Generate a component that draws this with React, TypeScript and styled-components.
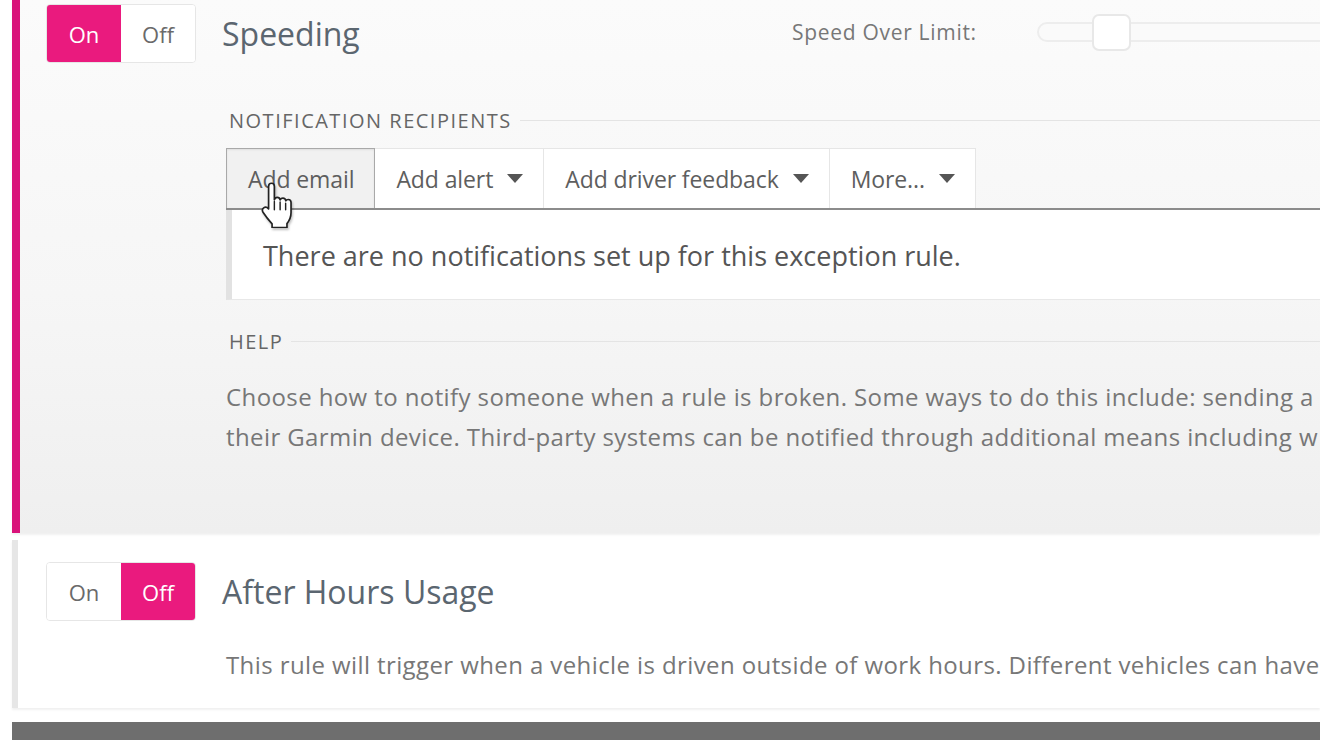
import styled, { createGlobalStyle } from 'styled-components';

const GlobalStyle = createGlobalStyle`
  html, body {
    margin: 0;
    padding: 0;
    background: #ffffff;
    overflow: hidden;
  }
  body {
    font-family: 'Open Sans', 'Noto Sans', sans-serif;
    color: #666;
  }
`;

const PINK = '#ea1a7e';

const HandCursor = () => (
  <svg width="36" height="46" viewBox="0 0 30 38">
    <path
      d="M8 3.5c0-1.6 1.1-2.6 2.4-2.6s2.4 1 2.4 2.6v11.2c0.4-1.4 1.3-2.1 2.4-2.1 1.3 0 2.2 0.9 2.4 2.2 0.4-1 1.3-1.6 2.3-1.6 1.3 0 2.3 1 2.4 2.3 0.4-0.7 1.2-1.1 2-1.1 1.4 0 2.4 1.1 2.4 2.6v8.3c0 4.2-1.6 7-3.4 9.2v3.4H10.9v-3.2c-2.2-2.4-5.1-5.8-7.4-9.4-0.9-1.4-0.8-3 0.4-3.9 1.3-1 3-0.5 4.1 0.9V3.5z"
      fill="#fff"
      stroke="#222"
      strokeWidth="1.4"
      strokeLinejoin="round"
    />
    <path d="M12.8 16v7M17.6 16.5v6.5M22.2 17.5v5.5" stroke="#222" strokeWidth="1.2" strokeLinecap="round" />
  </svg>
);

export default function App() {
  return (
    <>
      <GlobalStyle />
      <Page>
        <RulePanel $active>
          <Header>
            <Toggle>
              <ToggleOption $selected>On</ToggleOption>
              <ToggleOption>Off</ToggleOption>
            </Toggle>
            <RuleTitle>Speeding</RuleTitle>
            <SpeedGroup>
              <SpeedLabel>Speed Over Limit:</SpeedLabel>
              <SliderTrack>
                <SliderThumb />
              </SliderTrack>
            </SpeedGroup>
          </Header>

          <Section>
            <Legend>Notification Recipients</Legend>
            <ButtonBar>
              <ActionButton $pressed>
                Add email
                <Cursor>
                  <HandCursor />
                </Cursor>
              </ActionButton>
              <ActionButton>
                Add alert <Caret />
              </ActionButton>
              <ActionButton>
                Add driver feedback <Caret />
              </ActionButton>
              <ActionButton>
                More... <Caret />
              </ActionButton>
            </ButtonBar>
            <EmptyBox>There are no notifications set up for this exception rule.</EmptyBox>

            <Legend $tight>Help</Legend>
            <HelpText>
              <Line>
                Choose how to notify someone when a rule is broken. Some ways to do this include: sending a
              </Line>
              <Line>
                their Garmin device. Third-party systems can be notified through additional means including w
              </Line>
            </HelpText>
          </Section>
        </RulePanel>

        <RulePanel>
          <Header $roomy>
            <Toggle>
              <ToggleOption>On</ToggleOption>
              <ToggleOption $selected>Off</ToggleOption>
            </Toggle>
            <RuleTitle>After Hours Usage</RuleTitle>
          </Header>
          <Description>
            This rule will trigger when a vehicle is driven outside of work hours. Different vehicles can have
          </Description>
        </RulePanel>

        <Footer />
      </Page>
    </>
  );
}

const Page = styled.div`
  width: 1320px;
  height: 740px;
  padding-left: 12px;
  box-sizing: border-box;
  display: flex;
  flex-direction: column;
  overflow: hidden;
`;

const RulePanel = styled.div<{ $active?: boolean }>`
  flex-shrink: 0;
  box-sizing: border-box;
  overflow: hidden;
  border-left: ${(p) => (p.$active ? `8px solid #d9127a` : '6px solid #e6e6e6')};
  background: ${(p) => (p.$active ? 'linear-gradient(180deg, #fbfbfb 0%, #f6f6f6 55%, #efefef 100%)' : '#ffffff')};
  height: ${(p) => (p.$active ? '533px' : '168px')};
  margin-bottom: ${(p) => (p.$active ? '7px' : '14px')};
  box-shadow: 0 2px 2px rgba(0, 0, 0, 0.06);
`;

const Header = styled.div<{ $roomy?: boolean }>`
  display: flex;
  align-items: center;
  padding: ${(p) => (p.$roomy ? '22px 0 0 28px' : '4px 0 0 26px')};
`;

const Toggle = styled.div`
  display: flex;
  width: 150px;
  height: 59px;
  border: 1px solid #e6e6e6;
  border-radius: 4px;
  background: #fff;
  box-sizing: border-box;
  overflow: hidden;
  flex-shrink: 0;
`;

const ToggleOption = styled.div<{ $selected?: boolean }>`
  flex: 1;
  display: flex;
  align-items: center;
  justify-content: center;
  font-size: 22px;
  background: ${(p) => (p.$selected ? PINK : '#fff')};
  color: ${(p) => (p.$selected ? '#fff' : '#6a6a6a')};
`;

const RuleTitle = styled.h2`
  margin: 0 0 0 26px;
  font-weight: 400;
  font-size: 32px;
  color: #5b6670;
  letter-spacing: 0;
  flex: 1;
  white-space: nowrap;
`;

const SpeedGroup = styled.div`
  display: flex;
  align-items: center;
  width: 528px;
  flex-shrink: 0;
  margin-top: -4px;
`;

const SpeedLabel = styled.span`
  font-size: 21px;
  color: #777;
  letter-spacing: 0.7px;
  margin-right: 60px;
  white-space: nowrap;
`;

const SliderTrack = styled.div`
  position: relative;
  flex: 1;
  height: 20px;
  margin-right: -40px;
  box-sizing: border-box;
  border: 2px solid #ededed;
  border-radius: 10px;
  background: #fafafa;
`;

const SliderThumb = styled.div`
  position: absolute;
  left: 53px;
  top: -10px;
  width: 39px;
  height: 37px;
  box-sizing: border-box;
  border: 2px solid #e8e8e8;
  border-radius: 7px;
  background: #fff;
`;

const Section = styled.div`
  margin-left: 206px;
  padding-top: 44px;
`;

const Legend = styled.div<{ $tight?: boolean }>`
  display: flex;
  align-items: center;
  gap: 8px;
  padding-left: 3px;
  margin-top: ${(p) => (p.$tight ? '28px' : '0')};
  font-size: 20px;
  text-transform: uppercase;
  color: #666;
  letter-spacing: 1.5px;

  &::after {
    content: '';
    flex: 1;
    height: 1px;
    background: #e4e4e4;
  }
`;

const ButtonBar = styled.div`
  display: flex;
  margin-top: 14px;
  border-bottom: 2px solid #8c8c8c;
`;

const ActionButton = styled.div<{ $pressed?: boolean }>`
  position: relative;
  display: flex;
  align-items: center;
  gap: 14px;
  height: 60px;
  padding: 0 20px 0 21px;
  box-sizing: border-box;
  font-size: 23px;
  letter-spacing: -0.1px;
  color: #5e5e5e;
  white-space: nowrap;
  background: ${(p) => (p.$pressed ? '#f1f1f1' : '#fff')};
  border: 1px solid ${(p) => (p.$pressed ? '#a9a9a9' : '#e6e6e6')};
  border-bottom: none;
  border-left-width: ${(p) => (p.$pressed ? '1px' : '0')};
  box-shadow: ${(p) => (p.$pressed ? 'inset 0 1px 2px rgba(0,0,0,0.08)' : 'none')};
`;

const Caret = styled.span`
  width: 0;
  height: 0;
  border-left: 8px solid transparent;
  border-right: 8px solid transparent;
  border-top: 9px solid #555;
`;

const Cursor = styled.span`
  position: absolute;
  left: 32px;
  top: 33px;
  display: flex;
  filter: drop-shadow(1px 2px 1px rgba(0, 0, 0, 0.25));
`;

const EmptyBox = styled.div`
  height: 90px;
  display: flex;
  align-items: center;
  padding-left: 31px;
  padding-top: 2px;
  box-sizing: border-box;
  background: #fff;
  border-left: 6px solid #e2e2e2;
  border-bottom: 1px solid #e8e8e8;
  font-size: 27px;
  color: #555;
  white-space: nowrap;
`;

const HelpText = styled.div`
  margin-top: 22px;
  font-size: 24px;
  line-height: 40px;
  letter-spacing: 0.4px;
  color: #777;
`;

const Line = styled.div`
  white-space: nowrap;
`;

const Description = styled.p`
  margin: 27px 0 0 208px;
  font-size: 24px;
  letter-spacing: 0.4px;
  color: #777;
  white-space: nowrap;
`;

const Footer = styled.div`
  flex: 1;
  background: #6e6e6e;
`;
